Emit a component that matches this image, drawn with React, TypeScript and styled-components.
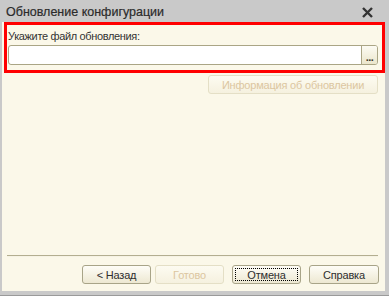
import React from "react";
import styled, { createGlobalStyle, css } from "styled-components";

const GlobalStyle = createGlobalStyle`
  html, body {
    margin: 0;
    padding: 0;
    background: #ffffff;
  }
  body {
    font-family: "Liberation Sans", Arial, sans-serif;
  }
`;

const Window = styled.div`
  width: 389px;
  height: 296px;
  box-sizing: border-box;
  display: flex;
  flex-direction: column;
  background: #c9c9c9;
  border-bottom: 1px solid #9a9a9a;
`;

const TitleBar = styled.div`
  height: 22px;
  flex: 0 0 22px;
  display: flex;
  align-items: center;
  justify-content: space-between;
  padding: 0 16px 0 6px;
`;

const Title = styled.div`
  font-size: 12.5px;
  color: #2b2b2b;
  padding-top: 2px;
  -webkit-text-stroke: 0.2px #2b2b2b;
`;

const CloseIcon = styled.svg`
  width: 11px;
  height: 11px;
  margin-top: 3px;
`;

const Body = styled.div`
  flex: 1;
  margin: 0 4px 4px 2px;
  background: #fbf8e9;
  display: flex;
  flex-direction: column;
  padding-bottom: 7px;
`;

const Highlight = styled.div`
  margin: 0 0 0 2px;
  border: 3px solid #ff0000;
  padding: 4px 4px 5px 1px;
  display: flex;
  flex-direction: column;
`;

const Label = styled.div`
  font-size: 11px;
  letter-spacing: -0.35px;
  line-height: 14px;
  color: #333333;
  margin-bottom: 2px;
`;

const InputBox = styled.div`
  height: 20px;
  box-sizing: border-box;
  display: flex;
  border: 1px solid #aaa585;
  border-radius: 3px;
  background: #ffffff;
  overflow: hidden;
`;

const InputField = styled.div`
  flex: 1;
`;

const PickButton = styled.div`
  width: 15px;
  border-left: 1px solid #aaa585;
  background: linear-gradient(#fcfbf3, #ebe6cc);
  display: flex;
  align-items: flex-end;
  justify-content: center;
  font-size: 11px;
  font-weight: bold;
  line-height: 13px;
  color: #3a3a2a;
  letter-spacing: -0.5px;
`;

const InfoRow = styled.div`
  display: flex;
  justify-content: flex-end;
  padding: 2px 7px 0 0;
`;

const Button = styled.div<{ $disabled?: boolean; $focused?: boolean; $width: number }>`
  position: relative;
  width: ${(p) => p.$width}px;
  height: 19px;
  box-sizing: border-box;
  display: flex;
  align-items: center;
  justify-content: center;
  font-size: 11px;
  letter-spacing: -0.2px;
  border-radius: 3px;
  border: 1px solid #a8a488;
  color: #2e2e2e;
  background: linear-gradient(#fefdf7, #ede8d2);
  ${(p) =>
    p.$disabled &&
    css`
      border-color: #e4dfc6;
      color: #dcc6a0;
      background: linear-gradient(#fdfbf1, #f5f1df);
    `}
  ${(p) =>
    p.$focused &&
    css`
      &::after {
        content: "";
        position: absolute;
        inset: 2px;
        border: 1px dotted #000000;
      }
    `}
`;

const Spacer = styled.div`
  flex: 1;
`;

const Separator = styled.div`
  height: 1px;
  margin: 0 7px 0 5px;
  background: #b3ae90;
  border-bottom: 1px solid #f6f3e4;
`;

const ButtonRow = styled.div`
  display: flex;
  justify-content: flex-end;
  padding: 8px 6px 0 0;
  gap: 8px;
`;

const Pair = styled.div`
  display: flex;
  gap: 4px;
`;

export default function App() {
  return (
    <>
      <GlobalStyle />
      <Window>
        <TitleBar>
          <Title>Обновление конфигурации</Title>
          <CloseIcon viewBox="0 0 11 11">
            <path d="M1 1 L10 10 M10 1 L1 10" stroke="#333" strokeWidth="2.4" />
          </CloseIcon>
        </TitleBar>
        <Body>
          <Highlight>
            <Label>Укажите файл обновления:</Label>
            <InputBox>
              <InputField />
              <PickButton>...</PickButton>
            </InputBox>
          </Highlight>
          <InfoRow>
            <Button $disabled $width={170}>
              Информация об обновлении
            </Button>
          </InfoRow>
          <Spacer />
          <Separator />
          <ButtonRow>
            <Pair>
              <Button $width={69}>&lt; Назад</Button>
              <Button $disabled $width={69}>
                Готово
              </Button>
            </Pair>
            <Button $focused $width={69}>
              Отмена
            </Button>
            <Button $width={70}>Справка</Button>
          </ButtonRow>
        </Body>
      </Window>
    </>
  );
}
